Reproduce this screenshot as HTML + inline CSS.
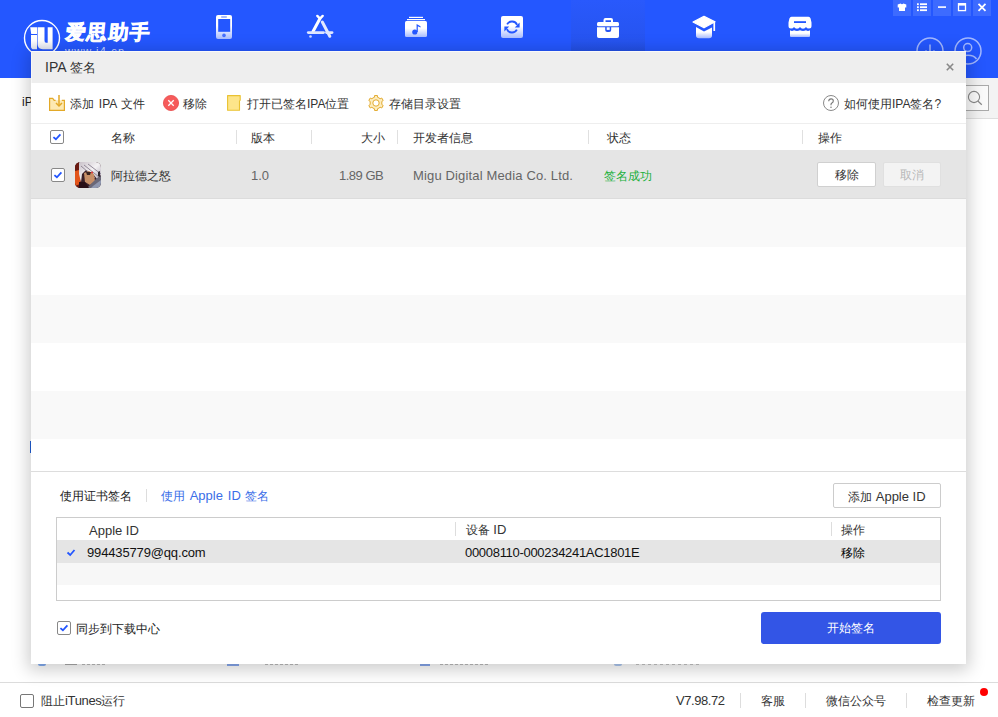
<!DOCTYPE html>
<html><head><meta charset="utf-8">
<style>
*{margin:0;padding:0;box-sizing:border-box}
html,body{width:998px;height:717px;overflow:hidden;background:#fff;font-family:"Liberation Sans",sans-serif;font-size:12px;color:#333}
.a{position:absolute}
svg{position:absolute;overflow:visible}
#hdr{position:absolute;left:0;top:0;width:998px;height:78px;background:#2457ff}
#tab{position:absolute;left:571px;top:0;width:74px;height:51px;background:linear-gradient(#2959fc,#2654f0 80%,#2350e6)}
.wb{position:absolute;top:0;width:18px;height:16px;background:#3d6bff}
#sub{position:absolute;left:0;top:78px;width:998px;height:41px;background:#fff}
#status{position:absolute;left:0;top:682px;width:998px;height:35px;border-top:1px solid #dcdcdc;background:#fff}
#shadow{position:absolute;left:31px;top:51px;width:935px;height:613px;box-shadow:0 3px 16px 3px rgba(0,0,0,.2)}
#dlg{position:absolute;left:31px;top:51px;width:935px;height:613px;background:#fff;overflow:hidden}
#ttl{position:absolute;left:0;top:0;width:935px;height:32px;background:#eeeeee;border-top:1px solid #f9f9f9;border-left:1px solid #f6f6f6}
.t{position:absolute;white-space:nowrap;line-height:14px}
.t13{font-size:13px}
.cb{position:absolute;width:14px;height:14px;border:1.5px solid #888;border-radius:2px;background:#fff}
.row{position:absolute;left:0;width:935px}
.sep{position:absolute;width:1px;background:#e0e0e0}
.btn{position:absolute;border:1px solid #d0d0d0;border-radius:2px;background:#fff;text-align:center;padding-top:1px}
</style></head><body>
<div id="hdr"></div>
<div id="tab"></div>
<svg width="998" height="77" style="left:0;top:0">
  <defs>
    <linearGradient id="ig" x1="0" y1="0" x2="0" y2="1">
      <stop offset="0" stop-color="#fff"/><stop offset="0.45" stop-color="#fff"/><stop offset="1" stop-color="#a9bdff"/>
    </linearGradient>
    <linearGradient id="lg" x1="0" y1="0" x2="0" y2="1">
      <stop offset="0" stop-color="#fff"/><stop offset="0.6" stop-color="#fff"/><stop offset="1" stop-color="#e2e6f2"/>
    </linearGradient>
  </defs>
  <!-- logo -->
  <circle cx="42" cy="38" r="17.5" fill="none" stroke="#fff" stroke-width="1.4"/>
  <path d="M30.2 27.2h6.8v6.7h-5.8z M31 35h6v14.2h-3.2q-2.8 0-2.8-2.8z" fill="url(#lg)"/>
  <path d="M37.6 27.2h6.9v13.2q0 2.4 1.6 2.4h1.6v-15.6h4.9v22.1h-9.8q-5.2 0-5.2-5.2z" fill="url(#lg)"/>
  <text x="65" y="38.6" font-size="20" font-weight="bold" fill="#fff" stroke="#fff" stroke-width="0.7" letter-spacing="1.3" style="font-family:'Liberation Sans',sans-serif" transform="translate(0 39) skewX(-6) translate(0 -39)">爱思助手</text>
  <text x="65" y="55" font-size="11" fill="#c9d6ff" letter-spacing="1.2" style="font-family:'Liberation Sans',sans-serif">www.i4.cn</text>
  <!-- phone -->
  <rect x="216" y="15" width="16" height="24" rx="2" fill="url(#ig)"/>
  <rect x="218.2" y="19" width="12" height="12.8" fill="#2457ff"/>
  <rect x="221" y="16.3" width="6" height="1.5" rx="0.7" fill="#2457ff" opacity="0.55"/>
  <circle cx="224" cy="35.4" r="1.8" fill="#2457ff" opacity="0.8"/>
  <!-- app store -->
  <g stroke="url(#ig)" fill="none" stroke-linecap="round">
  </g>
  <g fill="none" stroke-linecap="round">
    <path d="M320 18.5 L313 31.5" stroke="#fff" stroke-width="3"/>
    <path d="M317.3 15.9 L320 18.6 L322.7 15.9" stroke="#fff" stroke-width="2.4"/>
    <path d="M322.3 22 L329.8 36.3" stroke="#e2e8ff" stroke-width="3"/>
    <path d="M308.3 32.6 L323.5 32.6" stroke="#dde5ff" stroke-width="2.8"/>
    <path d="M326.5 32.6 L332 32.6" stroke="#dde5ff" stroke-width="2.8"/>
    <circle cx="310.5" cy="36.5" r="1.3" fill="#cdd8ff" stroke="none"/>
  </g>
  <!-- music -->
  <rect x="409" y="16.8" width="14" height="1.2" fill="#fff"/>
  <rect x="407" y="19" width="18" height="1.2" fill="#fff"/>
  <rect x="405" y="21" width="22" height="16" rx="1.5" fill="url(#ig)"/>
  <circle cx="414.8" cy="32" r="2.6" fill="#2457ff"/>
  <path d="M416.6 32 V24 L420.5 26.2 V27.4 L417.8 26.3 V32z" fill="#2457ff"/>
  <!-- refresh -->
  <rect x="501" y="16" width="22" height="22" rx="2" fill="url(#ig)"/>
  <path d="M507.14 24.42 A5.5 5.5 0 0 1 517.10 24.94" stroke="#2457ff" stroke-width="1.9" fill="none"/>
  <path d="M519.6 22.6 V27.4 H514.8z" fill="#2457ff"/>
  <path d="M516.86 29.58 A5.5 5.5 0 0 1 506.90 29.06" stroke="#2457ff" stroke-width="1.9" fill="none"/>
  <path d="M504.4 31.4 V26.6 H509.2z" fill="#2457ff"/>
  <!-- briefcase -->
  <path d="M603.5 22 V20 Q603.5 18 605.5 18 H611 Q613 18 613 20 V22 H611 V20.2 H605.5 V22z" fill="#fff"/>
  <rect x="597" y="22" width="22" height="4.3" rx="1.5" fill="#fff"/>
  <path d="M597 27.3 H605.2 V30 Q605.2 32 607.2 32 H609.2 Q611.2 32 611.2 30 V27.3 H619 V36.2 Q619 38 617.2 38 H598.8 Q597 38 597 36.2z" fill="#fff"/>
  <rect x="606.7" y="27.3" width="3" height="2.6" fill="#fff"/>
  <!-- grad cap -->
  <path d="M696 27 V35.5 Q696 38.2 699 38.2 H709 Q712 38.2 712 35.5 V27.5 L704 31.5z" fill="url(#ig)"/>
  <path d="M704 16.3 L715 21.8 L704 27.8 L693 22z" fill="#fff" stroke="#fff" stroke-width="1.2" stroke-linejoin="round"/>
  <rect x="713.4" y="21.5" width="1.7" height="9.5" fill="#fff"/>
  <!-- store -->
  <path d="M791.5 16.8 H808.5 Q810 16.8 810.6 18.5 L811.5 22.5 V26 Q811.5 28.5 809 28.5 Q806.8 28.5 806 27 Q805 28.8 803 28.8 Q801 28.8 800 27 Q799 28.8 797 28.8 Q795 28.8 794 27 Q793.2 28.5 791 28.5 Q788.5 28.5 788.5 26 V22.5 L789.4 18.5 Q790 16.8 791.5 16.8z" fill="#fff"/>
  <rect x="794" y="21.2" width="12" height="1.8" fill="#2457ff"/>
  <path d="M790 30.2 Q792 31.6 794 30.2 Q797 31.8 800 30.2 Q803 31.8 806 30.2 Q808 31.6 810 30.2 V36 Q810 37 809 37 H791 Q790 37 790 36z" fill="url(#ig)"/>
  <!-- right circles -->
  <circle cx="930" cy="51" r="13" fill="none" stroke="#a3b8ff" stroke-width="1.5"/>
  <path d="M930 44.5 V55" stroke="#a3b8ff" stroke-width="1.5"/>
  <path d="M925.5 50.5 L930 55 L934.5 50.5" fill="none" stroke="#a3b8ff" stroke-width="1.5"/>
  <circle cx="968" cy="51" r="13" fill="none" stroke="#a3b8ff" stroke-width="1.5"/>
  <circle cx="967.7" cy="47.6" r="4" fill="none" stroke="#a3b8ff" stroke-width="1.5"/>
  <path d="M959 59.5 Q962 55.2 968 55.2 Q974 55.2 976.5 59" fill="none" stroke="#a3b8ff" stroke-width="1.5"/>
</svg>
<div class="wb" style="left:893px"></div>
<div class="wb" style="left:913px"></div>
<div class="wb" style="left:933px"></div>
<div class="wb" style="left:953px"></div>
<div class="wb" style="left:973px"></div>
<svg width="998" height="20" style="left:0;top:0">
  <path d="M897.7 4.6 L900.6 3.4 Q902 5 903.4 3.4 L906.3 4.6 L906.3 7.4 L905 7.4 V11.1 H899 V7.4 L897.7 7.4z" fill="#fff"/>
  <g fill="#fff"><rect x="917" y="3.3" width="1.8" height="1.8"/><rect x="920" y="3.3" width="7" height="1.8"/><rect x="917" y="6.3" width="1.8" height="1.8"/><rect x="920" y="6.3" width="7" height="1.8"/><rect x="917" y="9.3" width="1.8" height="1.8"/><rect x="920" y="9.3" width="7" height="1.8"/></g>
  <rect x="938" y="6.3" width="8" height="1.6" fill="#fff"/>
  <rect x="958.5" y="3.8" width="7" height="6.8" fill="none" stroke="#fff" stroke-width="1.3"/>
  <rect x="958" y="3.2" width="8" height="2.4" fill="#fff"/>
  <path d="M978.5 3.8 L985.5 10.8 M985.5 3.8 L978.5 10.8" stroke="#fff" stroke-width="1.8"/>
</svg>
<div id="sub">
  <div class="t" style="left:22px;top:17px;color:#222">iP</div>
  <div class="a" style="left:900px;top:0;width:98px;height:41px;background:#f3f3f3;border-bottom:1px solid #dedede"></div>
  <div class="a" style="left:935px;top:7px;width:54px;height:26px;border:1px solid #aaa;background:#fafafa"></div>
  <svg width="20" height="20" style="left:966px;top:13px"><circle cx="8" cy="6" r="5.6" fill="none" stroke="#888" stroke-width="1.1"/><path d="M11.8 10 L15.8 13.8" stroke="#888" stroke-width="1.2"/></svg>
</div>
<div class="a" style="left:30px;top:441px;width:2px;height:12px;background:#1f5fd6"></div>
<div id="status">
  <div class="cb" style="left:20px;top:11px;border-width:1px;border-color:#777"></div>
  <div class="t" style="left:41px;top:11px">阻止<span class="t13" style="letter-spacing:-0.35px">iTunes</span>运行</div>
  <div class="t t13" style="left:676px;top:11px;letter-spacing:-0.45px">V7.98.72</div>
  <div class="sep" style="left:740px;top:10px;height:15px;background:#ddd"></div>
  <div class="t" style="left:761px;top:11px">客服</div>
  <div class="sep" style="left:805px;top:10px;height:15px;background:#ddd"></div>
  <div class="t" style="left:826px;top:11px">微信公众号</div>
  <div class="sep" style="left:906px;top:10px;height:15px;background:#ddd"></div>
  <div class="t" style="left:927px;top:11px">检查更新</div>
  <div class="a" style="left:980px;top:5px;width:8px;height:8px;border-radius:50%;background:#ff0000"></div>
</div>
<div class="a" style="opacity:.55;left:38px;top:664px;width:8px;height:2px;border-radius:0 0 4px 4px;background:#1f6ae6"></div>
<div class="a" style="opacity:.55;left:65px;top:664px;width:12px;height:1px;background:#666"></div>
<div class="a" style="opacity:.55;left:82px;top:664px;width:24px;height:1px;background:repeating-linear-gradient(90deg,#888 0 3px,transparent 3px 5px)"></div>
<div class="a" style="opacity:.55;left:227px;top:664px;width:12px;height:2px;background:#2460e0"></div>
<div class="a" style="opacity:.55;left:265px;top:664px;width:35px;height:1px;background:repeating-linear-gradient(90deg,#888 0 3px,transparent 3px 5px)"></div>
<div class="a" style="opacity:.55;left:420px;top:664px;width:10px;height:2px;background:#2460e0"></div>
<div class="a" style="opacity:.55;left:440px;top:664px;width:50px;height:1px;background:repeating-linear-gradient(90deg,#888 0 3px,transparent 3px 5px)"></div>
<div class="a" style="opacity:.55;left:614px;top:664px;width:8px;height:2px;border-radius:0 0 4px 4px;background:#6a9ae6"></div>
<div class="a" style="opacity:.55;left:636px;top:664px;width:64px;height:1px;background:repeating-linear-gradient(90deg,#999 0 3px,transparent 3px 6px)"></div>
<div id="shadow"></div>
<div id="dlg">
  <div id="ttl">
    <div class="t" style="left:13px;top:8px;font-size:13px;color:#333"><span style="font-size:14px">IPA</span> 签名</div>
    <svg width="10" height="10" style="left:914px;top:11px"><path d="M0.8 0.8 L7.2 7.2 M7.2 0.8 L0.8 7.2" stroke="#888" stroke-width="1.6"/></svg>
  </div>
  <div class="row" style="top:72px;height:1px;background:#eeeeee"></div>
  <!-- toolbar icons -->
  <svg width="16" height="16" style="left:18px;top:44px">
    <path d="M0.6 3.3 H3.7 L5.2 5.3 H15.4 V15.4 H0.6z" fill="#fde9b2"/>
    <path d="M6.6 5.3 H5.2 L3.7 3.3 H0.6 V15.4 H15.4 V5.3 H12.8" fill="none" stroke="#e3a928" stroke-width="1.2"/>
    <path d="M10 0 V11" stroke="#e3a928" stroke-width="1.5"/>
    <path d="M7 8 L10 11 L13 8" fill="none" stroke="#e3a928" stroke-width="1.5"/>
  </svg>
  <svg width="16" height="16" style="left:132px;top:44px">
    <circle cx="8" cy="8" r="7.6" fill="#f65b5b" stroke="#e84a4a" stroke-width="0.8"/>
    <path d="M5.3 5.3 L10.7 10.7 M10.7 5.3 L5.3 10.7" stroke="#fff" stroke-width="1.3"/>
  </svg>
  <svg width="14" height="16" style="left:196px;top:44px">
    <path d="M0.6 0.6 H13.2 V5.2 L12.5 6 V15.2 H0.6z" fill="#fde58a" stroke="#eac232" stroke-width="1.1" stroke-linejoin="round"/>
  </svg>
  <svg width="16" height="16" style="left:337px;top:44px">
    <path d="M5.05 2.89 L6.37 2.33 L6.55 0.54 L9.45 0.54 L9.63 2.33 L10.95 2.89 L12.10 3.76 L13.74 3.01 L15.19 5.53 L13.72 6.57 L13.90 8.00 L13.72 9.43 L15.19 10.47 L13.74 12.99 L12.10 12.24 L10.95 13.11 L9.63 13.67 L9.45 15.46 L6.55 15.46 L6.37 13.67 L5.05 13.11 L3.90 12.24 L2.26 12.99 L0.81 10.47 L2.28 9.43 L2.10 8.00 L2.28 6.57 L0.81 5.53 L2.26 3.01 L3.90 3.76z" fill="#fdecbd" stroke="#e3ab30" stroke-width="1" stroke-linejoin="round"/>
    <circle cx="8" cy="8" r="3.2" fill="#fff" stroke="#e3ab30" stroke-width="1"/>
  </svg>
  <svg width="16" height="16" style="left:792px;top:44px">
    <circle cx="8" cy="8" r="7.5" fill="none" stroke="#8a8a8a" stroke-width="1"/>
    <path d="M5.7 6.3 Q5.8 3.9 8.1 3.9 Q10.3 3.9 10.3 5.9 Q10.3 7.2 8.9 7.9 Q8 8.4 8 9.6 V10.2" fill="none" stroke="#777" stroke-width="1.1"/>
    <circle cx="8" cy="12.2" r="0.75" fill="#777"/>
  </svg>
  <div class="t" style="left:39px;top:46px;word-spacing:1.5px">添加 IPA 文件</div>
  <div class="t" style="left:152px;top:46px">移除</div>
  <div class="t" style="left:216px;top:46px">打开已签名IPA位置</div>
  <div class="t" style="left:358px;top:46px">存储目录设置</div>
  <div class="t" style="left:813px;top:46px">如何使用IPA签名?</div>
  <!-- table header -->
  <div class="cb" style="left:19px;top:79px"><svg width="12" height="12" style="left:0;top:0"><path d="M2.4 6.1 L4.9 8.3 L9.4 3.4" stroke="#2255ff" stroke-width="1.8" fill="none"/></svg></div>
  <div class="t" style="left:80px;top:80px">名称</div>
  <div class="sep" style="left:205px;top:79px;height:14px"></div>
  <div class="t" style="left:220px;top:80px">版本</div>
  <div class="sep" style="left:280px;top:79px;height:14px"></div>
  <div class="t" style="left:330px;top:80px">大小</div>
  <div class="sep" style="left:366px;top:79px;height:14px"></div>
  <div class="t" style="left:382px;top:80px">开发者信息</div>
  <div class="sep" style="left:557px;top:79px;height:14px"></div>
  <div class="t" style="left:576px;top:80px">状态</div>
  <div class="sep" style="left:771px;top:79px;height:14px"></div>
  <div class="t" style="left:787px;top:80px">操作</div>
  <!-- rows -->
  <div class="row" style="top:99px;height:49px;background:#e5e5e5;border-bottom:1px solid #dcdcdc"></div>
  <div class="row" style="top:148px;height:48px;background:#f9f9f9"></div>
  <div class="row" style="top:244px;height:48px;background:#f9f9f9"></div>
  <div class="row" style="top:340px;height:48px;background:#f9f9f9"></div>
  <div class="row" style="top:420px;height:1px;background:#dddddd"></div>
  <div class="cb" style="left:20px;top:117px"><svg width="12" height="12" style="left:0;top:0"><path d="M2.4 6.1 L4.9 8.3 L9.4 3.4" stroke="#2255ff" stroke-width="1.8" fill="none"/></svg></div>
  <svg width="26" height="26" style="left:44px;top:111px">
    <defs><clipPath id="ic"><rect width="26" height="26" rx="5.5"/></clipPath>
    <linearGradient id="hair" x1="0" y1="0" x2="1" y2="1"><stop offset="0" stop-color="#c8c0c8"/><stop offset="0.5" stop-color="#f4f2f4"/><stop offset="1" stop-color="#a8a0b0"/></linearGradient></defs>
    <g clip-path="url(#ic)">
      <rect width="26" height="26" fill="#3a2028"/>
      <path d="M0 0 H5 L6 26 H0z" fill="#6a1a10"/>
      <path d="M0 9 L4 8 L6 14 L5 22 L0 24z" fill="#e2541a"/>
      <path d="M4 0 H26 V13 L22 17 L18 12 L11 8 L7 12 L6 20 L4 12z" fill="url(#hair)"/>
      <path d="M6 4 L20 16 M9 3 L24 15 M13 2 L26 12" stroke="#8a8090" stroke-width="0.9"/>
      <path d="M9 11 L14 9 L19 12 L20 19 L15 23 L10 20z" fill="#c89068"/>
      <path d="M11 10 L16 10 L15 13 L12 13z" fill="#3a2420"/>
      <circle cx="17" cy="10.5" r="1" fill="#e03030"/>
      <path d="M12 26 L22 16 L26 14 V26z" fill="#6a6878"/>
      <path d="M18 24 L26 18 V26 H16z" fill="#9098b0"/>
      <path d="M4 20 L10 20 L14 26 H4z" fill="#2a1018"/>
      <path d="M23 10 L25 9 L25 15 L23 14z" fill="#302830"/>
    </g>
  </svg>
  <div class="t" style="left:80px;top:118px">阿拉德之怒</div>
  <div class="t t13" style="left:220px;top:118px;color:#666">1.0</div>
  <div class="t t13" style="left:308px;top:118px;color:#666;letter-spacing:-0.5px">1.89 GB</div>
  <div class="t t13" style="left:382px;top:118px;color:#666;letter-spacing:0.15px">Migu Digital Media Co. Ltd.</div>
  <div class="t" style="left:573px;top:118px;color:#22b03c">签名成功</div>
  <div class="btn" style="left:786px;top:111px;width:59px;height:25px;line-height:23px">移除</div>
  <div class="btn" style="left:852px;top:111px;width:58px;height:25px;line-height:23px;background:#f3f3f3;border-color:#e0e0e0;color:#b8b8b8">取消</div>
  <!-- bottom -->
  <div class="t" style="left:29px;top:438px;color:#222">使用证书签名</div>
  <div class="sep" style="left:115px;top:438px;height:13px;background:#ddd"></div>
  <div class="t" style="left:130px;top:438px;color:#3a6ee8;word-spacing:1.3px">使用 <span class="t13">Apple ID</span> 签名</div>
  <div class="btn" style="left:802px;top:432px;width:108px;height:25px;line-height:23px;border-color:#ccc">添加 <span class="t13">Apple ID</span></div>
  <div class="a" style="left:25px;top:466px;width:885px;height:84px;border:1px solid #ccc;overflow:hidden">
    <div class="t t13" style="left:32px;top:5.5px">Apple ID</div>
    <div class="sep" style="left:398px;top:4px;height:14px;background:#ddd"></div>
    <div class="t" style="left:409px;top:5px">设备 <span class="t13">ID</span></div>
    <div class="sep" style="left:774px;top:4px;height:14px;background:#ddd"></div>
    <div class="t" style="left:784px;top:5px">操作</div>
    <div class="a" style="left:0;top:22px;width:885px;height:23px;background:#e5e5e5"></div>
    <div class="a" style="left:0;top:45px;width:885px;height:22px;background:#f7f7f7"></div>
    <svg width="10" height="10" style="left:10px;top:31px"><path d="M0.5 3.5 L3.2 6 L7.5 1" stroke="#2457ff" stroke-width="1.8" fill="none"/></svg>
    <div class="t t13" style="left:30px;top:27.5px;color:#111;letter-spacing:-0.15px">994435779@qq.com</div>
    <div class="t t13" style="left:408px;top:28px;color:#111;letter-spacing:-0.3px">00008110-000234241AC1801E</div>
    <div class="t" style="left:784px;top:28px;color:#000">移除</div>
  </div>
  <div class="cb" style="left:26px;top:570px"><svg width="12" height="12" style="left:0;top:0"><path d="M2.4 6.1 L4.9 8.3 L9.4 3.4" stroke="#2255ff" stroke-width="1.8" fill="none"/></svg></div>
  <div class="t" style="left:45px;top:571px;color:#222">同步到下载中心</div>
  <div class="a" style="left:730px;top:561px;width:180px;height:32px;border-radius:3px;background:#3355e6;color:#fff;text-align:center;line-height:32px">开始签名</div>
</div>
</body></html>
